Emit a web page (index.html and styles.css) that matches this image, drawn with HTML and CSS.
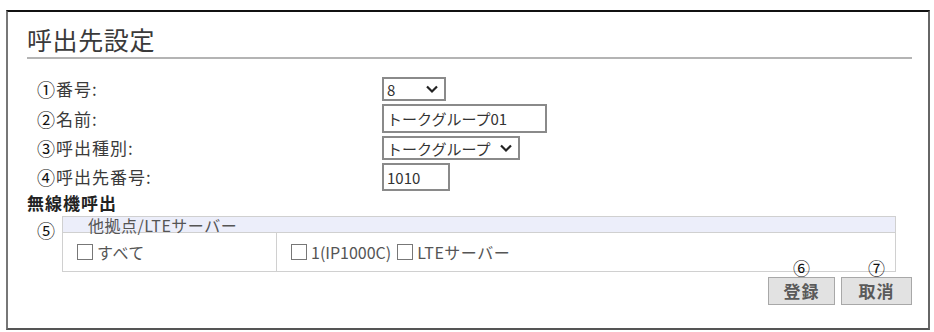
FILE: index.html
```html
<!DOCTYPE html>
<html lang="ja">
<head>
<meta charset="utf-8">
<title>呼出先設定</title>
<link rel="stylesheet" href="styles.css">
</head>
<body>
<div class="frame">
  <h1 class="title">呼出先設定</h1>
  <div class="form">
    <div class="label"><span class="mark">①</span>番号:</div>
    <div class="ctrl">
      <div class="select sel-num"><span>8</span><svg class="chev" viewBox="0 0 14 10" width="14" height="10"><path d="M2 2.5 L7 7.5 L12 2.5" fill="none" stroke="#222" stroke-width="2.2"/></svg></div>
    </div>
    <div class="label"><span class="mark">②</span>名前:</div>
    <div class="ctrl"><div class="input inp-name">トークグループ01</div></div>
    <div class="label"><span class="mark">③</span>呼出種別:</div>
    <div class="ctrl">
      <div class="select sel-type"><span>トークグループ</span><svg class="chev" viewBox="0 0 14 10" width="14" height="10"><path d="M2 2.5 L7 7.5 L12 2.5" fill="none" stroke="#222" stroke-width="2.2"/></svg></div>
    </div>
    <div class="label"><span class="mark">④</span>呼出先番号:</div>
    <div class="ctrl"><div class="input inp-num">1010</div></div>
  </div>
  <div class="section">無線機呼出</div>
  <div class="tablewrap">
    <span class="mark mark5">⑤</span>
    <div class="table">
      <div class="thead">他拠点/LTEサーバー</div>
      <div class="trow">
        <div class="cell cell1"><span class="box"></span>すべて</div>
        <div class="cell cell2"><span class="box"></span><span class="t1">1(IP1000C)</span><span class="box"></span>LTEサーバー</div>
      </div>
    </div>
  </div>
  <div class="buttons">
    <div class="btnwrap">
      <span class="anno">⑥</span>
      <div class="btn btn-reg">登録</div>
    </div>
    <div class="btnwrap">
      <span class="anno">⑦</span>
      <div class="btn btn-cancel">取消</div>
    </div>
  </div>
</div>
</body>
</html>
```
FILE: styles.css
```css
* { box-sizing: border-box; }
html, body { margin: 0; padding: 0; background: #fff; }
body {
  font-family: "Noto Sans CJK JP", "Noto Sans", sans-serif;
  color: #333;
}
.frame {
  margin: 10px 0 0 6px;
  width: 924px;
  height: 320px;
  border-top: 2px solid #111;
  border-left: 2px solid #777;
  border-right: 2px solid #666;
  border-bottom: 2px solid #555;
  padding-left: 19px;
  padding-right: 16px;
}
.title {
  margin: 12px 0 0 0;
  font-size: 25px;
  font-weight: normal;
  line-height: 30px;
  letter-spacing: 0.6px;
  color: #3a3a3a;
  padding-bottom: 3px;
  border-bottom: 2px solid #b4b4b4;
}
.form {
  margin-top: 18px;
  padding-left: 10px;
  display: grid;
  grid-template-columns: 345px auto;
  grid-template-rows: 24px 29px 24px 28px;
  row-gap: 3px;
}
.label {
  display: flex;
  align-items: center;
  font-size: 17px;
  letter-spacing: 1px;
  color: #3a3a3a;
  line-height: 20px;
}
.mark {
  font-size: 18px;
  color: #111;
  letter-spacing: 0;
  margin-right: 1px;
}
.ctrl { display: flex; align-items: stretch; }
.select, .input {
  border: 2px solid #8a8a8a;
  display: flex;
  align-items: center;
  font-size: 15px;
  color: #333;
  padding-left: 3px;
  background: #fff;
}
.select { justify-content: space-between; padding-right: 5px; }
.sel-num { width: 64px; }
.sel-type { width: 138px; }
.inp-name { width: 165px; }
.inp-num { width: 68px; }
.section {
  margin-top: 2px;
  font-size: 17px;
  font-weight: bold;
  letter-spacing: 1px;
  line-height: 20px;
  color: #222;
}
.tablewrap {
  margin-top: 3px;
  padding-left: 10px;
  display: flex;
  align-items: flex-start;
}
.mark5 { width: 25px; line-height: 20px; margin: 4px 0 0 0; }
.table {
  width: 834px;
  border: 1px solid #d0d0d0;
}
.thead {
  height: 16px;
  background: #eceefa;
  border-bottom: 1px solid #d0d0d0;
  font-size: 16px;
  line-height: 16px;
  letter-spacing: 0.5px;
  color: #555;
  padding-left: 25px;
}
.trow { display: flex; height: 38px; }
.cell {
  display: flex;
  align-items: center;
  font-size: 16px;
  letter-spacing: 0.5px;
  color: #555;
}
.cell1 { width: 214px; border-right: 1px solid #d0d0d0; padding-left: 14px; }
.cell2 { padding-left: 14px; }
.box {
  display: inline-block;
  width: 16px;
  height: 16px;
  border: 1px solid #777;
  margin-right: 4px;
  background: #fff;
}
.t1 { margin-right: 6px; letter-spacing: 0; }
.buttons {
  margin-top: 5px;
  display: flex;
  justify-content: flex-end;
  gap: 6px;
}
.btnwrap { position: relative; }
.btn {
  height: 28px;
  background: #e2e2e2;
  border: 1px solid #a8a8a8;
  display: flex;
  align-items: center;
  justify-content: center;
  font-size: 17px;
  line-height: 20px;
  font-weight: 600;
  color: #5a5a5a;
  letter-spacing: 1px;
}
.btn-reg { width: 67px; }
.btn-cancel { width: 71px; }
.anno {
  position: absolute;
  top: -17px;
  left: 50%;
  transform: translateX(-50%);
  font-size: 17px;
  color: #111;
  line-height: 16px;
}
```
